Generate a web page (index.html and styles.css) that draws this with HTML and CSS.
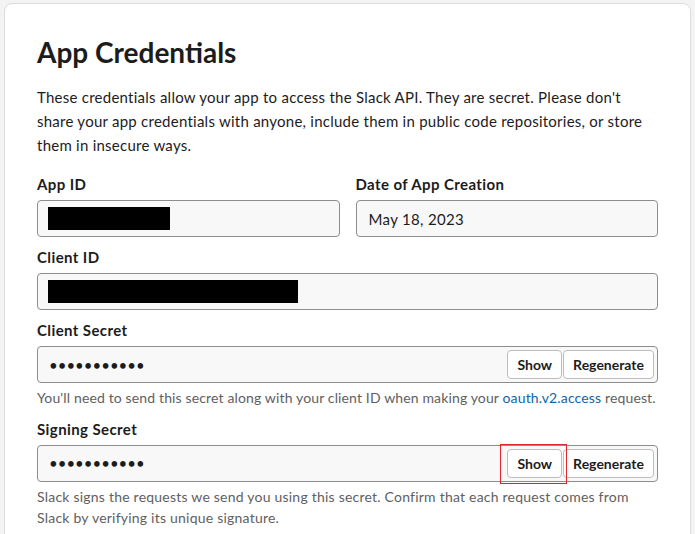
FILE: index.html
```html
<!DOCTYPE html>
<html>
<head>
<meta charset="utf-8">
<link rel="stylesheet" href="styles.css">
</head>
<body>
<div class="card">
  <h1 class="title">App Credentials</h1>
  <p class="intro">These credentials allow your app to access the Slack API. They are secret. Please don't share your app credentials with anyone, include them in public code repositories, or store them in insecure ways.</p>

  <div class="row">
    <div class="field">
      <label class="label">App ID</label>
      <div class="input"><span class="redact redact-short"></span></div>
    </div>
    <div class="field">
      <label class="label">Date of App Creation</label>
      <div class="input"><span class="value">May 18, 2023</span></div>
    </div>
  </div>

  <div class="field">
    <label class="label">Client ID</label>
    <div class="input"><span class="redact redact-long"></span></div>
  </div>

  <div class="field">
    <label class="label">Client Secret</label>
    <div class="input secret">
      <span class="dots">•••••••••••</span>
      <div class="btns">
        <button class="btn">Show</button>
        <button class="btn">Regenerate</button>
      </div>
    </div>
    <p class="help">You'll need to send this secret along with your client ID when making your <a class="link">oauth.v2.access</a> request.</p>
  </div>

  <div class="field">
    <label class="label">Signing Secret</label>
    <div class="input secret">
      <span class="dots">•••••••••••</span>
      <div class="btns">
        <span class="hl-wrap"><button class="btn">Show</button><span class="highlight"></span></span>
        <button class="btn">Regenerate</button>
      </div>
    </div>
    <p class="help help-wide">Slack signs the requests we send you using this secret. Confirm that each request comes from Slack by verifying its unique signature.</p>
  </div>
</div>
</body>
</html>
```

FILE: styles.css
```css
* { box-sizing: border-box; }
html, body { margin: 0; padding: 0; }
body {
  background: #f3f3f3;
  font-family: Lato, "Noto Sans", sans-serif;
  color: #1d1c1d;
  padding: 3px 4px 0 4px;
  height: 534px;
  overflow: hidden;
}
.card {
  background: #fff;
  border: 1px solid #dcdcdc;
  border-radius: 8px;
  padding: 30px 32px 40px 32px;
}
.title {
  margin: 0;
  font-size: 28px;
  line-height: 36px;
  font-weight: 700;
}
.intro {
  margin: 15px 0 0 0;
  font-size: 15px;
  line-height: 24px;
  letter-spacing: 0.25px;
}
.row {
  display: grid;
  grid-template-columns: 1fr 1fr;
  column-gap: 16px;
}
.field { margin-top: 8px; display: flex; flex-direction: column; }
.row .field { margin-top: 15px; }
.label {
  font-size: 15px;
  font-weight: 700;
  line-height: 24px;
  margin-bottom: 4px;
  letter-spacing: 0.4px;
}
.input {
  height: 37px;
  border: 1px solid #8d8d8d;
  border-radius: 4px;
  background: #f8f8f8;
  display: flex;
  align-items: center;
  padding: 0 3px 0 10px;
  font-size: 15px;
}
.value { padding-left: 2px; letter-spacing: 0.33px; }
.redact { display: block; height: 23px; background: #000; }
.redact-short { width: 122px; }
.redact-long { width: 250px; }
.secret { justify-content: space-between; }
.dots { font-size: 15px; padding-left: 1px; }
.btns { display: flex; gap: 1px; }
.btn {
  font-family: Lato, "Noto Sans", sans-serif;
  font-size: 14px;
  font-weight: 700;
  color: #1d1c1d;
  background: #fff;
  border: 1px solid #bdbdbd;
  border-radius: 4px;
  height: 29px;
  padding: 0 9px;
  cursor: pointer;
}
.hl-wrap { position: relative; display: flex; }
.highlight {
  position: absolute;
  left: -7px; right: -5px;
  top: -5px; bottom: -6px;
  border: 1px solid #e3242b;
  pointer-events: none;
}
.help {
  margin: 4px 0 0 0;
  font-size: 14px;
  line-height: 21.5px;
  color: #616061;
  letter-spacing: 0.14px;
}
.help-wide { letter-spacing: 0.22px; }
.link { color: #1264a3; text-decoration: none; }
```
